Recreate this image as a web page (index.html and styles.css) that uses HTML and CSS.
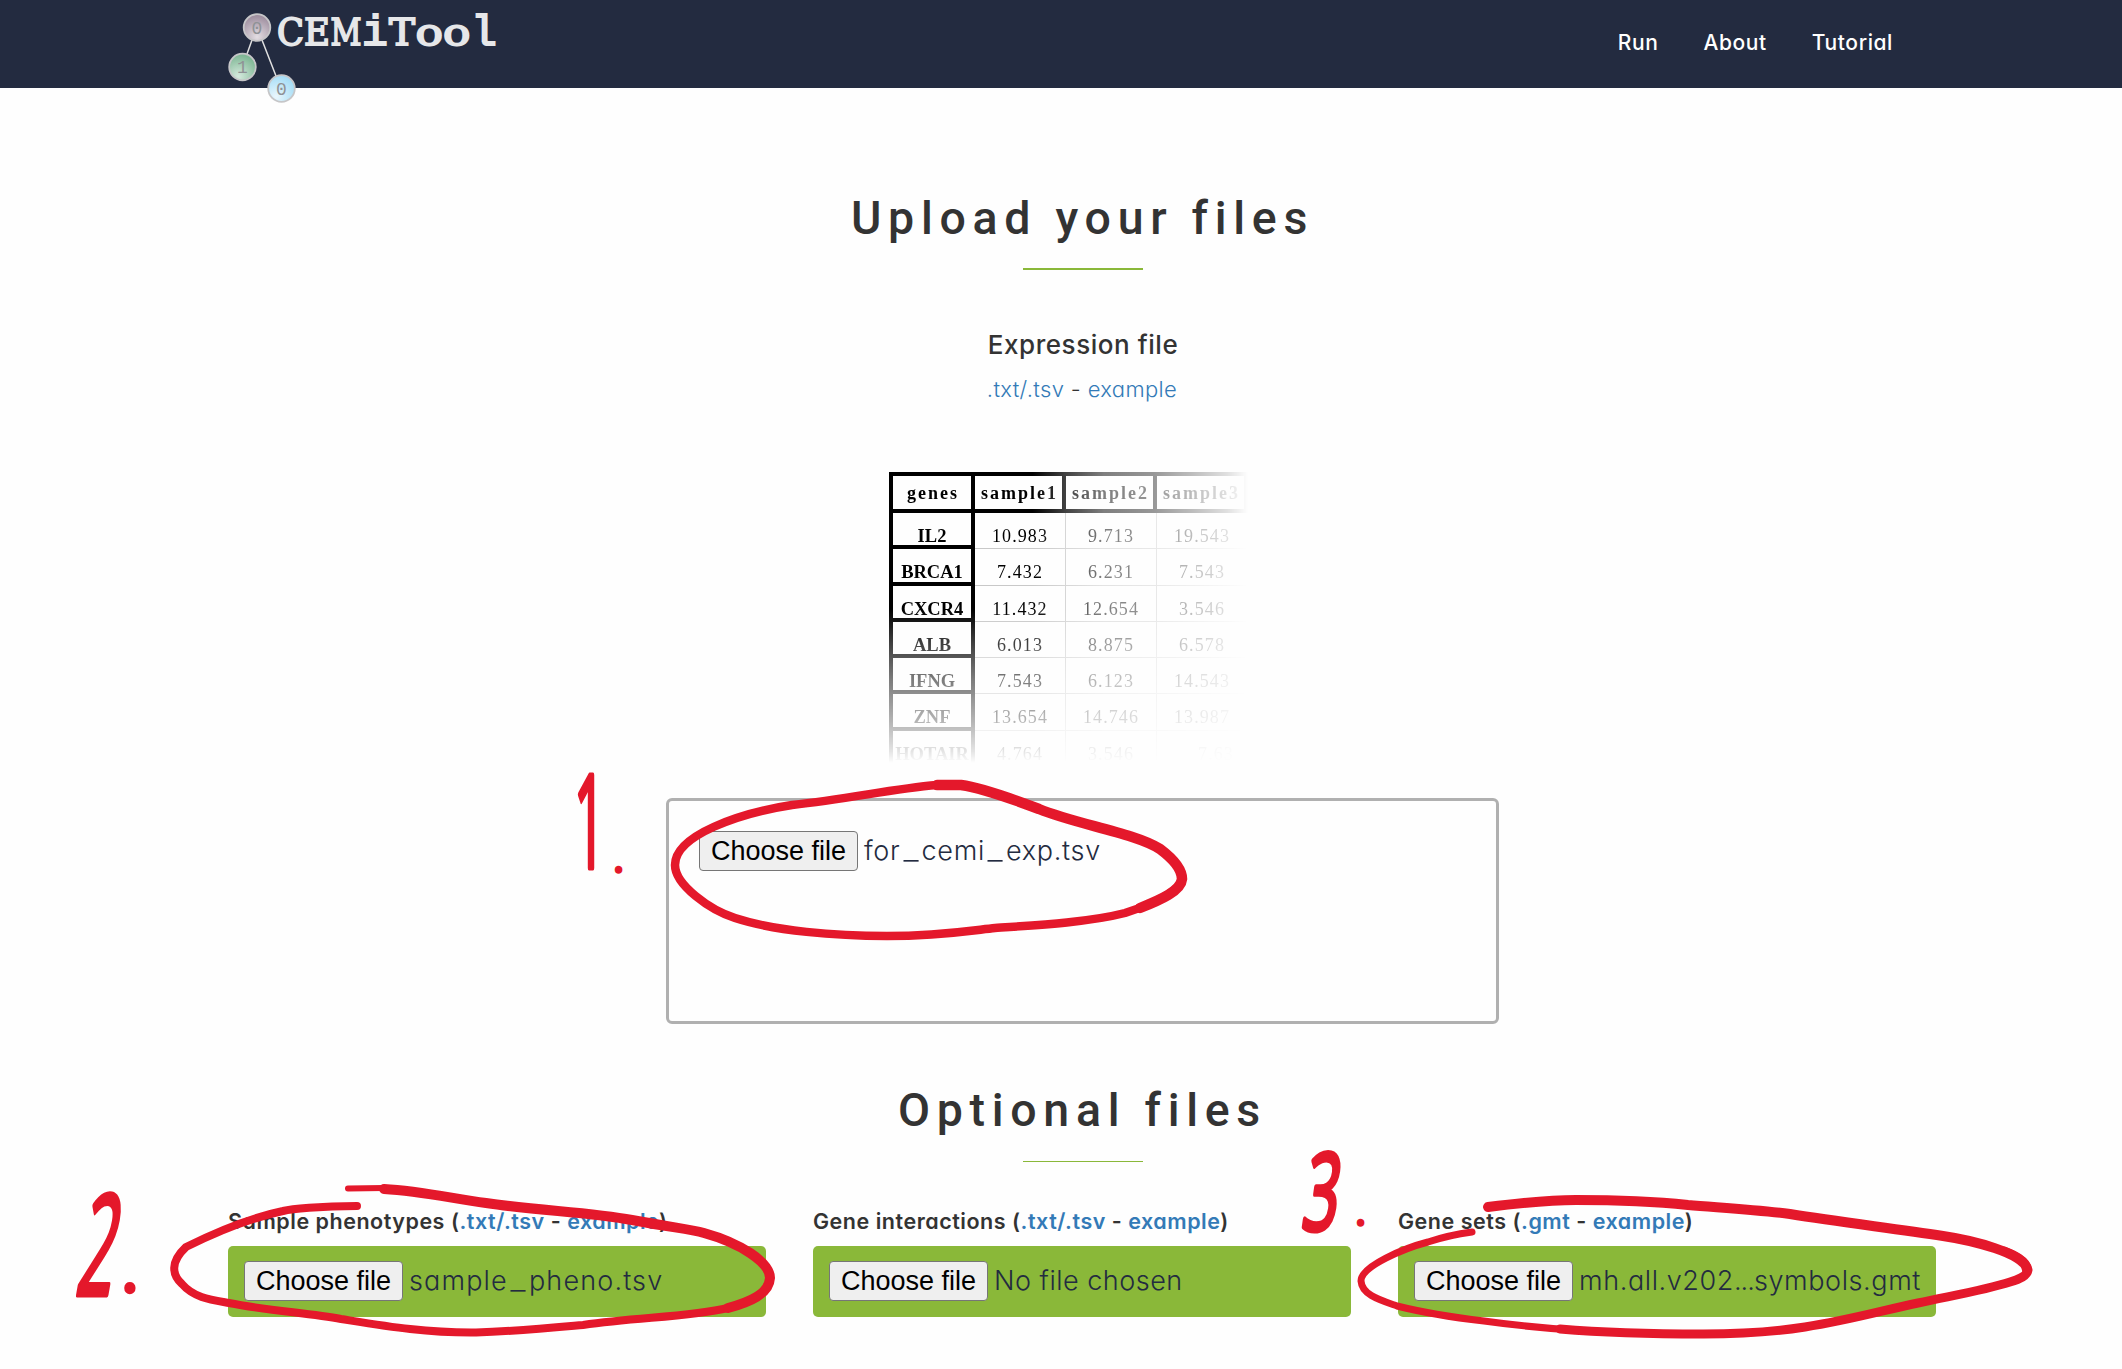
FILE: index.html
```html
<!DOCTYPE html>
<html lang="en">
<head>
<meta charset="utf-8">
<title>CEMiTool</title>
<link rel="stylesheet" href="styles.css">
</head>
<body>
<header class="navbar">
  <svg class="logo" width="280" height="106" viewBox="0 0 280 106">
    <defs>
      <radialGradient id="mauve" cx=".5" cy=".85" r=".8"><stop offset="0" stop-color="#e3dde2"/><stop offset="1" stop-color="#9d8d9e"/></radialGradient>
      <radialGradient id="green" cx=".35" cy=".85" r=".8"><stop offset="0" stop-color="#d5e9dd"/><stop offset="1" stop-color="#7fb795"/></radialGradient>
      <radialGradient id="blue" cx=".3" cy=".8" r=".8"><stop offset="0" stop-color="#eaf7fd"/><stop offset="1" stop-color="#a5ddf6"/></radialGradient>
    </defs>
    <path class="logo-edge" d="M24 40L19 54M34 40L48 76"/>
    <g class="logo-node">
      <circle cx="29" cy="27.5" r="13.3" fill="url(#mauve)"/>
      <circle cx="14.500" cy="67" r="13.300" fill="url(#green)"/>
      <circle cx="53.500" cy="88.500" r="13.300" fill="url(#blue)"/>
    </g>
    <g class="logo-digit">
      <text x="29" y="33.500">0</text>
      <text x="14.500" y="73">1</text>
      <text x="53.500" y="94.500">0</text>
    </g>
    <text class="logo-name" y="44.500"><tspan x="49" textLength="27" lengthAdjust="spacingAndGlyphs">C</tspan><tspan x="76" textLength="26" lengthAdjust="spacingAndGlyphs">E</tspan><tspan x="102.500" textLength="31" lengthAdjust="spacingAndGlyphs">M</tspan><tspan class="logo-narrow" x="134">i</tspan><tspan x="161" textLength="26" lengthAdjust="spacingAndGlyphs">T</tspan><tspan x="187.500" textLength="27.500" lengthAdjust="spacingAndGlyphs">o</tspan><tspan x="215" textLength="27.500" lengthAdjust="spacingAndGlyphs">o</tspan><tspan class="logo-narrow" x="243">l</tspan></text>
  </svg>
  <nav class="menu">
    <a>Run</a>
    <a>About</a>
    <a>Tutorial</a>
  </nav>
</header>

<main class="page">
  <h1 class="title">Upload your files</h1>
  <div class="rule"></div>
  <h2 class="subtitle">Expression file</h2>
  <p class="formats"><a>.txt/.tsv</a> - <a>example</a></p>

  <div class="sample">
    <div class="cell head">genes</div><div class="cell head">sample1</div><div class="cell head">sample2</div><div class="cell head">sample3</div>
    <div class="cell gene">IL2</div><div class="cell">10.983</div><div class="cell">9.713</div><div class="cell">19.543</div>
    <div class="cell gene">BRCA1</div><div class="cell">7.432</div><div class="cell">6.231</div><div class="cell">7.543</div>
    <div class="cell gene">CXCR4</div><div class="cell">11.432</div><div class="cell">12.654</div><div class="cell">3.546</div>
    <div class="cell gene">ALB</div><div class="cell">6.013</div><div class="cell">8.875</div><div class="cell">6.578</div>
    <div class="cell gene">IFNG</div><div class="cell">7.543</div><div class="cell">6.123</div><div class="cell">14.543</div>
    <div class="cell gene">ZNF</div><div class="cell">13.654</div><div class="cell">14.746</div><div class="cell">13.987</div>
    <div class="cell gene">HOTAIR</div><div class="cell">4.764</div><div class="cell">3.546</div><div class="cell last">7.63</div>
  </div>

  <div class="dropzone">
    <button class="choose">Choose file</button><span class="filename name-exp">for<span class="underscore">_</span>cemi<span class="underscore">_</span>exp.tsv</span>
  </div>

  <h1 class="title title-optional">Optional files</h1>
  <div class="rule rule-thin"></div>

  <div class="columns">
    <section>
      <h3 class="label">Sample phenotypes (<a>.txt/.tsv</a> - <a>example</a>)</h3>
      <div class="upload"><button class="choose">Choose file</button><span class="filename name-pheno">sample<span class="underscore">_</span>pheno.tsv</span></div>
    </section>
    <section>
      <h3 class="label">Gene interactions (<a>.txt/.tsv</a> - <a>example</a>)</h3>
      <div class="upload"><button class="choose">Choose file</button><span class="filename">No file chosen</span></div>
    </section>
    <section>
      <h3 class="label">Gene sets (<a>.gmt</a> - <a>example</a>)</h3>
      <div class="upload"><button class="choose">Choose file</button><span class="filename name-gmt">mh.all.v202<span class="dots">...</span>symbols.gmt</span></div>
    </section>
  </div>
</main>

<svg class="ink" width="2122" height="1369" viewBox="0 0 2122 1369">
  <g class="ink-line">
    <path stroke-width="8.500" d="M937 785C890 789 850 799 792 805C740 813 675 835 675 865C675 885 710 910 735 918C775 931 835 936 887 936C940 936 975 930 995 928C1040 925 1090 922 1125 913C1150 905 1182 891 1182 878"/>
    <path stroke-width="10.500" d="M937 785L961 785C982 788 1010 798 1039 809C1075 824 1135 833 1160 849C1172 858 1182 869 1182 879C1181 891 1160 900 1140 908"/>
    <path stroke-width="8" d="M357 1206C320 1206 291 1209 283 1211C240 1220 200 1240 186 1247C170 1262 172 1275 182 1284C194 1298 212 1300 229 1303C270 1311 310 1313 341 1319C385 1326 425 1333 476 1332.500C520 1331 550 1328 583 1325C640 1317 690 1317 728 1308C750 1302 769 1293 770 1278"/>
    <path stroke-width="10" d="M384 1189C420 1191 450 1198 486 1203C540 1211 590 1212 632 1220C675 1228 690 1229 704 1233C740 1243 770 1262 770 1278C769 1294 750 1302 728 1308"/>
    <path stroke-width="6" d="M348 1188.500L384 1188"/>
    <path stroke-width="7" d="M1472 1232C1457 1234 1440 1238 1428 1242C1405 1248 1361 1266 1361 1281C1362 1295 1380 1300 1397 1306C1425 1313 1450 1317 1484 1321C1520 1326 1553 1329 1586 1331C1630 1334 1670 1334 1703 1334"/>
    <path stroke-width="9" d="M1560 1329C1620 1334 1670 1334 1703 1334C1745 1334 1780 1331 1805 1327C1850 1320 1880 1311 1918 1303C1955 1295 1985 1290 2010 1282C2020 1279 2027 1276 2028 1270C2026 1260 2014 1255 2004 1251"/>
    <path stroke-width="10" d="M1488 1207C1520 1203 1545 1200 1576 1200C1615 1200 1650 1201 1688 1205C1725 1208 1760 1210 1790 1214C1840 1222 1890 1228 1943 1236C1970 1240 2026 1253 2027 1270"/>
  </g>
  <g class="ink-number">
    <text transform="translate(574 868) scale(.42 1)" font-size="130">1</text>
    <text transform="translate(614 872) scale(.7)" font-size="50">.</text>
    <text transform="translate(74 1295) skewX(-10) scale(.46 1)" font-size="140">2</text>
    <text transform="translate(123 1291) scale(1.050)" font-size="50">.</text>
    <text transform="translate(1300 1230) skewX(-8) scale(.58 1)" font-size="107">3</text>
    <text transform="translate(1356 1225) scale(.7)" font-size="50">.</text>
  </g>
</svg>
</body>
</html>
```

FILE: styles.css
```css
* { box-sizing: border-box; }

body {
  margin: 0;
  width: 2122px;
  height: 1369px;
  position: relative;
  overflow: hidden;
  background: #fefefe;
  color: #333;
  font-family: Inter, "Noto Sans", sans-serif;
  font-feature-settings: "cv11";
}

h1, h2, h3, p { margin: 0; }
a { color: #337ab7; }

/* Top bar */
.navbar {
  height: 88px;
  padding: 0 229px 0 228px;
  display: flex;
  justify-content: space-between;
  background: #232b40;
}
.logo { overflow: visible; flex: none; }
.logo-edge { fill: none; stroke: #e0e0e0; stroke-width: 1.5; }
.logo-node { stroke: #c6c6c8; stroke-width: 1.8; }
.logo-digit { font: 18px "Liberation Mono", monospace; fill: #8f9296; text-anchor: middle; }
.logo-name { font: 37px "DejaVu Serif", serif; fill: #e6e7e9; stroke: #e6e7e9; stroke-width: 1.8; }
.logo-narrow { font: 43px "Liberation Mono", monospace; stroke-width: 2; }

.menu { display: flex; gap: 45px; font-size: 21px; font-weight: 500; line-height: 86px; letter-spacing: .6px; }
.menu a { color: #fff; }

/* Page body */
.page { width: 1708px; margin-left: 228px; padding-top: 98px; }

.title {
  font: 500 46.5px/64px Roboto, sans-serif;
  letter-spacing: 6.7px;
  text-align: center;
  padding-left: 1px;
}
.title-optional { margin-top: 54px; }

.rule { width: 120px; height: 2px; margin: 18px 0 0 795px; background: #8ab839; }
.rule-thin { height: 1px; margin-top: 19px; }

.subtitle { margin-top: 55px; padding-left: 2px; font-size: 26px; font-weight: 500; line-height: 40px; letter-spacing: .55px; text-align: center; }
.formats { margin-top: 8px; font-size: 22px; font-weight: 300; line-height: 32px; letter-spacing: .35px; text-align: center; }

/* Sample table, fading out to the right and to the bottom */
.sample {
  width: 359px;
  height: 291px;
  margin: 67px 0 0 661px;
  display: grid;
  grid-template-columns: 82px 91px 91px 91px;
  grid-template-rows: 37px repeat(7, 36.300px);
  overflow: hidden;
  color: #000;
  font: 18px/36px "Liberation Serif", serif;
  letter-spacing: 1.1px;
  text-align: center;
  border-top: 4px solid #000;
  border-left: 4px solid #000;
  -webkit-mask-image:
    linear-gradient(90deg, #000 40%, rgba(0,0,0,.75) 49%, rgba(0,0,0,.5) 60%, rgba(0,0,0,.4) 74%, rgba(0,0,0,.12) 94%, transparent 100%),
    linear-gradient(180deg, #000 47%, rgba(0,0,0,.75) 59%, rgba(0,0,0,.5) 72%, rgba(0,0,0,.3) 85%, rgba(0,0,0,.1) 96%, transparent 100%);
  -webkit-mask-composite: source-in;
  mask-composite: intersect;
}
.cell { padding-top: 5px; border-right: 1px solid #c8c8c8; border-bottom: 1px solid #c8c8c8; }
.head {
  padding: 0 0 0 2px;
  font-weight: bold;
  line-height: 35px;
  letter-spacing: 2px;
  border-right: 4px solid #000;
  border-bottom: 4px solid #000;
}
.gene {
  font-weight: bold;
  font-size: 18.500px;
  letter-spacing: 0;
  border-right: 4px solid #000;
  border-bottom: 4px solid #000;
}
.last { padding-left: 28px; }

/* File pickers */
.dropzone {
  width: 833px;
  height: 226px;
  margin: 35px 0 0 438px;
  padding: 30px;
  display: flex;
  align-items: flex-start;
  border: 3px solid #b0b0b0;
  border-radius: 6px;
}
.choose {
  width: 159px;
  height: 40px;
  padding: 0;
  flex: none;
  border: 1.500px solid #767676;
  border-radius: 4px;
  background: #efefef;
  color: #000;
  font: 27px/36px "Liberation Sans", Arial, sans-serif;
}
.filename {
  margin-left: 6px;
  color: #232b40;
  font-size: 27px;
  font-weight: 300;
  line-height: 39px;
  letter-spacing: .5px;
  white-space: nowrap;
}
.name-exp { letter-spacing: .7px; }
.name-pheno { letter-spacing: 1.15px; }
.name-gmt { letter-spacing: .6px; }
.underscore { display: inline-block; margin: 0 4.500px; letter-spacing: 0; transform: scaleX(1.25); }
.dots { letter-spacing: -1px; }

.columns { margin-top: 44px; display: grid; grid-template-columns: repeat(3, 538px); column-gap: 47px; }
.label { font-size: 21.5px; font-weight: 600; line-height: 30px; letter-spacing: .52px; white-space: nowrap; }
.upload {
  height: 71px;
  margin-top: 10px;
  padding: 15px 16px;
  display: flex;
  border-radius: 5px;
  background: #8ab839;
}

/* Red pen marks over the page */
.ink { position: absolute; left: 0; top: 0; pointer-events: none; }
.ink-line { fill: none; stroke: #e4182b; stroke-linecap: round; stroke-linejoin: round; }
.ink-number { font-family: "Open Sans", sans-serif; fill: #e4182b; stroke: #e4182b; stroke-width: 5; stroke-linejoin: round; }
```
